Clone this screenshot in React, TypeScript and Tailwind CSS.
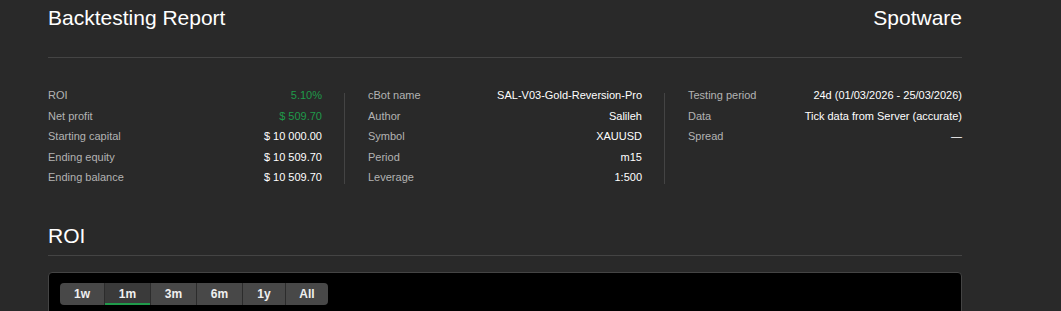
import * as React from "react";

type Row = { label: string; value: string; green?: boolean };

const COLUNAS: Row[][] = [
  [
    { label: "ROI", value: "5.10%", green: true },
    { label: "Net profit", value: "$ 509.70", green: true },
    { label: "Starting capital", value: "$ 10 000.00" },
    { label: "Ending equity", value: "$ 10 509.70" },
    { label: "Ending balance", value: "$ 10 509.70" },
  ],
  [
    { label: "cBot name", value: "SAL-V03-Gold-Reversion-Pro" },
    { label: "Author", value: "Salileh" },
    { label: "Symbol", value: "XAUUSD" },
    { label: "Period", value: "m15" },
    { label: "Leverage", value: "1:500" },
  ],
  [
    { label: "Testing period", value: "24d (01/03/2026 - 25/03/2026)" },
    { label: "Data", value: "Tick data from Server (accurate)" },
    { label: "Spread", value: "—" },
  ],
];

// larguras inclui o separador de 1px
const PERIODOS = [
  { id: "1w", w: "w-[45px]" },
  { id: "1m", w: "w-[46px]" },
  { id: "3m", w: "w-[46px]" },
  { id: "6m", w: "w-[46px]" },
  { id: "1y", w: "w-[43px]" },
  { id: "All", w: "w-[42px]" },
];

function Coluna({ rows }: { rows: Row[] }) {
  return (
    <div className="w-[274px] shrink-0">
      {rows.map((r) => (
        <div
          key={r.label}
          className="flex items-center justify-between h-[20.5px] leading-[20.5px] text-[11px]"
        >
          <span className="text-[#b3b3b3]">{r.label}</span>
          <span className={r.green ? "text-[#1f9a4a]" : "text-white"}>
            {r.value}
          </span>
        </div>
      ))}
    </div>
  );
}

function Divisor() {
  return (
    <div className="ml-[22px] mr-[23px] mt-[8px] mb-[4px] w-px self-stretch bg-[#444444]" />
  );
}

export default function App() {
  const [periodo, setPeriodo] = React.useState("1m");

  return (
    <div className="min-h-screen bg-[#292929] font-[family-name:'Liberation_Sans',Arial,sans-serif]">
      <div className="w-[914px] ml-[48px]">
        {/* Header */}
        <header className="flex items-center justify-between pt-[5px] pb-[26px] border-b border-[#444444] text-[21px] leading-[26px] text-white">
          <h1>Backtesting Report</h1>
          <span>Spotware</span>
        </header>

        {/* Resumo */}
        <section className="flex mt-[27px]">
          <Coluna rows={COLUNAS[0]} />
          <Divisor />
          <Coluna rows={COLUNAS[1]} />
          <Divisor />
          <Coluna rows={COLUNAS[2]} />
        </section>

        {/* ROI */}
        <h2 className="mt-[36px] pb-[7px] border-b border-[#444444] text-[21px] leading-[24px] text-white">
          ROI
        </h2>

        <div className="mt-[16px] h-[80px] bg-black border border-[#444444] rounded-[4px] pt-[10px] pl-[11px]">
          <div className="flex">
            {PERIODOS.map((p, i) => {
              const ativo = p.id === periodo;
              return (
                <button
                  key={p.id}
                  onClick={() => setPeriodo(p.id)}
                  className={[
                    p.w,
                    "h-[22px] text-[12px] font-bold text-[#f0f0f0] border-r border-[#2c2c2c] last:border-r-0",
                    ativo
                      ? "bg-[#3a3a3a] shadow-[inset_0_-2px_0_#1f9a4a]"
                      : "bg-[#484848]",
                    i === 0 ? "rounded-l-[4px]" : "",
                    i === PERIODOS.length - 1 ? "rounded-r-[4px]" : "",
                  ].join(" ")}
                >
                  {p.id}
                </button>
              );
            })}
          </div>
        </div>
      </div>
    </div>
  );
}
